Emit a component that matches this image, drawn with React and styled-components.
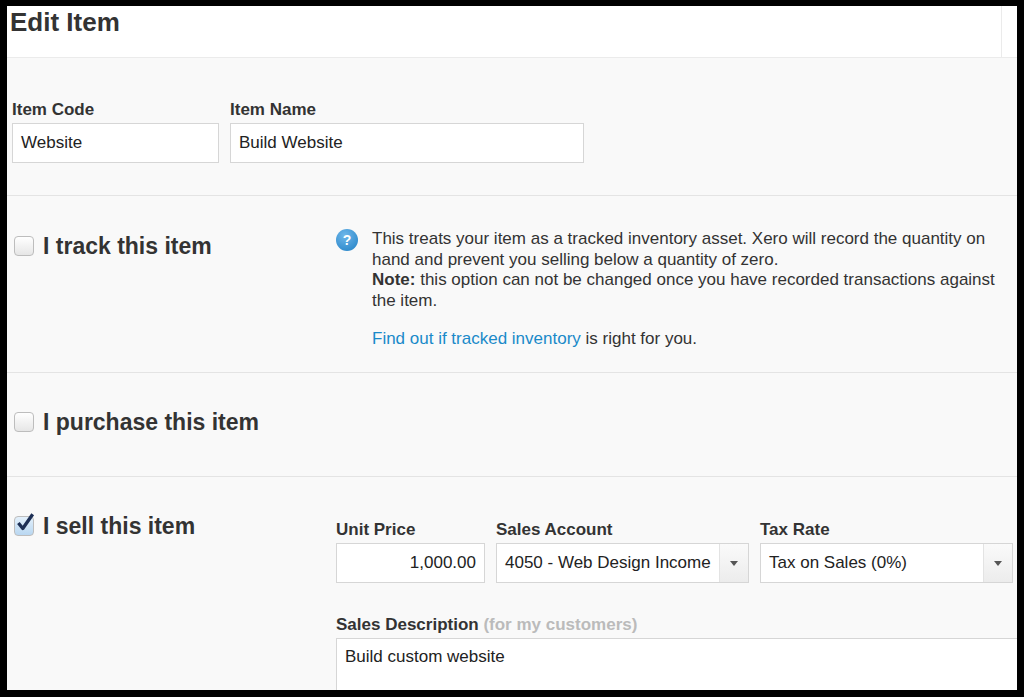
import React from "react";
import styled, { createGlobalStyle } from "styled-components";

const Global = createGlobalStyle`
  html, body { margin: 0; padding: 0; background: #000; }
  body { font-family: "Liberation Sans", Arial, sans-serif; color: #333; }
`;

const Frame = styled.div`
  margin: 6px 7px 0 7px;
  width: 1010px;
  height: 684px;
  overflow: hidden;
  background: #f9f9f9;
`;

const Header = styled.div`
  height: 51px;
  background: #fff;
  border-bottom: 1px solid #ebebeb;
  display: flex;
  justify-content: space-between;
`;

const Title = styled.h1`
  margin: 0;
  padding: 2px 0 0 3px;
  font-size: 26px;
  font-weight: bold;
  line-height: 28px;
  color: #333;
`;

const HeaderDivider = styled.div`
  width: 15px;
  border-left: 1px solid #ebebeb;
`;

const Section = styled.div`
  border-bottom: 1px solid #e4e4e4;
  height: ${(p) => p.h}px;
  box-sizing: border-box;
  padding: ${(p) => p.pad};
  display: flex;
  gap: ${(p) => p.gap || 0}px;
`;

const Field = styled.div`
  display: flex;
  flex-direction: column;
  gap: 4px;
  width: ${(p) => p.w}px;
  flex-shrink: 0;
`;

const Label = styled.label`
  font-size: 17px;
  font-weight: bold;
  line-height: 18px;
  color: #333;
`;

const Muted = styled.span`
  color: #bbb;
`;

const Input = styled.div`
  height: 40px;
  box-sizing: border-box;
  border: 1px solid #d6d6d6;
  background: #fff;
  font-size: 17px;
  line-height: 38px;
  padding: 0 8px;
  color: #222;
  display: flex;
  justify-content: ${(p) => (p.align === "right" ? "flex-end" : "space-between")};
  white-space: nowrap;
`;

const Arrow = styled.div`
  width: 28px;
  flex-shrink: 0;
  margin-right: -8px;
  border-left: 1px solid #e3e3e3;
  background: linear-gradient(#fafafa, #ececec);
  display: flex;
  align-items: center;
  justify-content: center;
  &::after {
    content: "";
    border-left: 4px solid transparent;
    border-right: 4px solid transparent;
    border-top: 5px solid #555;
  }
`;

const CheckCol = styled.div`
  width: ${(p) => p.w}px;
  flex-shrink: 0;
  display: flex;
  align-items: flex-start;
  gap: 9px;
`;

const Box = styled.div`
  width: 20px;
  height: 20px;
  margin-top: 3px;
  box-sizing: border-box;
  border: 1px solid #bdbdbd;
  border-radius: 4px;
  background: ${(p) => (p.checked ? "linear-gradient(#e3f0fb,#b9d7f1)" : "linear-gradient(#fff,#e6e6e6)")};
  position: relative;
`;

const Heading = styled.div`
  font-size: 23px;
  font-weight: bold;
  line-height: 26px;
  color: #333;
`;

const Info = styled.div`
  display: flex;
  gap: 14px;
  font-size: 17px;
  line-height: 20.5px;
  color: #333;
  margin-top: -4px;
`;

const QIcon = styled.div`
  width: 22px;
  height: 22px;
  border-radius: 50%;
  flex-shrink: 0;
  background: radial-gradient(circle at 40% 30%, #6fb7ea, #1f7fc4);
  color: #fff;
  font-weight: bold;
  font-size: 14px;
  display: flex;
  align-items: center;
  justify-content: center;
`;

const LinkLine = styled.div`
  margin-top: 18px;
`;

const Link = styled.a`
  color: #1a8ac9;
  text-decoration: none;
`;

const SellForm = styled.div`
  display: flex;
  flex-direction: column;
  gap: 33px;
  padding-top: 8px;
`;

const Row = styled.div`
  display: flex;
  gap: ${(p) => p.gap}px;
`;

const TextArea = styled.div`
  height: 60px;
  width: 700px;
  border: 1px solid #d6d6d6;
  background: #fff;
  font-size: 17px;
  padding: 8px;
  color: #222;
`;

export default function App() {
  return (
    <>
      <Global />
      <Frame>
        <Header>
          <Title>Edit Item</Title>
          <HeaderDivider />
        </Header>
        <Section h={138} pad="43px 0 0 5px" gap={11}>
          <Field w={207}>
            <Label>Item Code</Label>
            <Input>Website</Input>
          </Field>
          <Field w={354}>
            <Label>Item Name</Label>
            <Input>Build Website</Input>
          </Field>
        </Section>
        <Section h={177} pad="37px 0 0 7px">
          <CheckCol w={322}>
            <Box />
            <Heading>I track this item</Heading>
          </CheckCol>
          <Info>
            <QIcon>?</QIcon>
            <div>
              This treats your item as a tracked inventory asset. Xero will record the quantity on hand and prevent you selling below a quantity of zero.
              <br />
              <b>Note:</b> this option can not be changed once you have recorded transactions against the item.
              <LinkLine>
                <Link>Find out if tracked inventory</Link> is right for you.
              </LinkLine>
            </div>
          </Info>
        </Section>
        <Section h={104} pad="36px 0 0 7px">
          <CheckCol w={322}>
            <Box />
            <Heading>I purchase this item</Heading>
          </CheckCol>
        </Section>
        <Section h={220} pad="36px 0 0 7px">
          <CheckCol w={322}>
            <Box checked>
              <svg width="22" height="22" viewBox="0 0 20 20" style={{ position: "absolute", left: -1, top: -5 }}>
                <path d="M4 10 L8 15 L17 2" fill="none" stroke="#1d2f55" strokeWidth="3" strokeLinejoin="round" />
              </svg>
            </Box>
            <Heading>I sell this item</Heading>
          </CheckCol>
          <SellForm>
            <Row gap={11}>
              <Field w={149}>
                <Label>Unit Price</Label>
                <Input align="right">1,000.00</Input>
              </Field>
              <Field w={253}>
                <Label>Sales Account</Label>
                <Input>4050 - Web Design Income<Arrow /></Input>
              </Field>
              <Field w={253}>
                <Label>Tax Rate</Label>
                <Input>Tax on Sales (0%)<Arrow /></Input>
              </Field>
            </Row>
            <Field w={700}>
              <Label>Sales Description <Muted>(for my customers)</Muted></Label>
              <TextArea>Build custom website</TextArea>
            </Field>
          </SellForm>
        </Section>
      </Frame>
    </>
  );
}
